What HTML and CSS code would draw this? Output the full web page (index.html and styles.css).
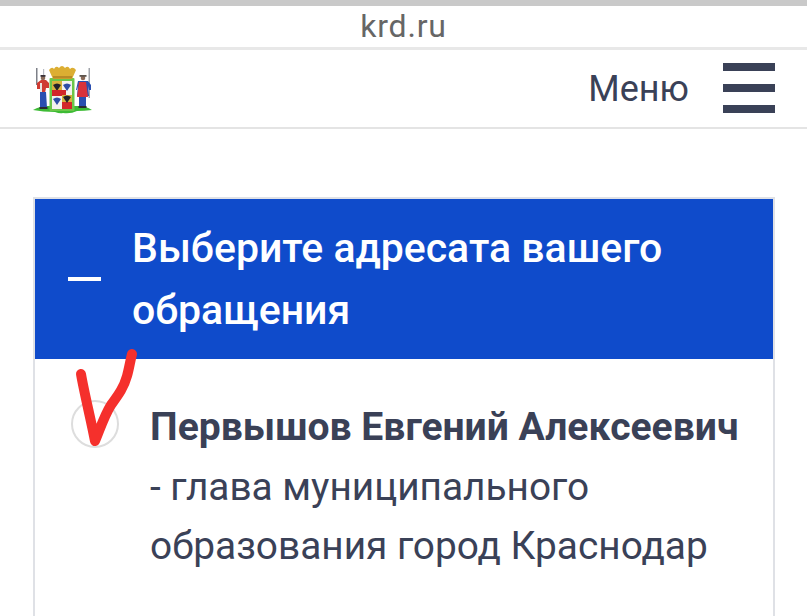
FILE: index.html
```html
<!DOCTYPE html>
<html lang="ru">
<head>
<meta charset="utf-8">
<title>krd.ru</title>
<link rel="stylesheet" href="styles.css">
</head>
<body>
<div class="addr">krd.ru</div>
<div class="top">
  <svg class="logo" width="66" height="56" viewBox="0 0 66 56">
    <filter id="soft"><feGaussianBlur stdDeviation="0.45"/></filter>
    <g filter="url(#soft)">
      <!-- ground -->
      <path d="M3 49q7-4 15-4h30q8 0 14 4q-8 1-15 1q-6 3-14 2q-3 1-8-1q-12 0-22-2z" fill="#3dbb35"/>
      <!-- left guard -->
      <rect x="6" y="7" width="1.500" height="17" fill="#7d8088"/>
      <rect x="13" y="8" width="1.200" height="8" fill="#b9bcc4"/>
      <circle cx="13" cy="17" r="2.300" fill="#8a6a58"/>
      <rect x="10.500" y="14" width="5" height="1.800" fill="#3a3238"/>
      <path d="M7 22l4-3h5l3 3v5h-3l-1 5h-5v-4H7z" fill="#cf3a30"/>
      <rect x="10" y="22" width="2" height="9" fill="#e8e4e0"/>
      <path d="M10 31h6l1 16h-7z" fill="#2c4fb0"/>
      <rect x="9.500" y="46" width="8" height="2" fill="#2b2b33"/>
      <!-- shield -->
      <rect x="19.500" y="17" width="25" height="33" rx="1" fill="#6cc64a"/>
      <rect x="22" y="20" width="20" height="28" fill="#f4f2ee"/>
      <rect x="22" y="20" width="10" height="14" fill="#d9b23c"/>
      <path d="M23 24q4-3 8 0l-2 3l-2 3l-2-3z" fill="#23232b"/>
      <rect x="22" y="29" width="14" height="6" fill="#d3262c"/>
      <path d="M33 24q4-3 8 0l-2 3l-2 3l-2-3z" fill="#2f4ea6"/>
      <path d="M23 38q4-3 8 0l-2 3l-2 3l-2-3z" fill="#2f4ea6"/>
      <rect x="32" y="34" width="10" height="7" fill="#d9b23c"/>
      <rect x="32" y="41" width="10" height="7" fill="#d3262c"/>
      <path d="M33 36q4-3 8 0l-2 3l-2 3l-2-3z" fill="#23232b"/>
      <!-- crown -->
      <path d="M19 9q3-4 5-1q2-4 5-1q3-4 6 0q3-3 5 1q3-3 6 1l-4 9H23z" fill="#dcae32"/>
      <rect x="23" y="15" width="19" height="2.500" fill="#b98a26"/>
      <!-- right guard -->
      <rect x="58.500" y="7" width="1.500" height="30" fill="#a0a3aa"/>
      <circle cx="53" cy="17" r="2.300" fill="#8a6a58"/>
      <rect x="49.500" y="14" width="7" height="1.800" fill="#5d554e"/>
      <path d="M46 29l2-9h10l3 4v5h-2l-1-4l1 10H47l1-10l-1 4z" fill="#2c4fb0"/>
      <path d="M49 21h7l2 15H47z" fill="#d9333a"/>
      <rect x="49" y="36" width="7" height="10" fill="#2c4fb0"/>
      <rect x="48.500" y="45" width="8" height="2" fill="#2b2b33"/>
    </g>
  </svg>
  <div class="menu">
    <span class="menu-label">Меню</span>
    <span class="burger"><i></i><i></i><i></i></span>
  </div>
</div>
<div class="content">
  <div class="box">
    <div class="box-head">
      <span class="dash"></span>
      <h2>Выберите адресата вашего обращения</h2>
    </div>
    <div class="row">
      <span class="radio"></span>
      <p class="person"><b>Первышов Евгений Алексеевич</b><br>- глава муниципального образования город Краснодар</p>
    </div>
  </div>
</div>
<svg class="tick" width="807" height="616" viewBox="0 0 807 616">
  <path d="M81 374C84 392 91 420 95 441C99 432 104 416 111 405C119 394 124 387 127 376C129 369 130 362 132 354" fill="none" stroke="#f5302c" stroke-width="10" stroke-linecap="round" stroke-linejoin="round"/>
</svg>
</body>
</html>
```
FILE: styles.css
```css
html, body { margin:0; padding:0; }
body { width:807px; height:616px; overflow:hidden; background:#fff; font-family:Roboto, "Noto Sans", sans-serif; color:#3a4157; }
.addr { height:41px; border-top:6px solid #c9c9c9; border-bottom:3px solid #e8e8e8; text-align:center; font-size:32px; line-height:41px; color:#666; letter-spacing:.8px; }
.top { height:77px; border-bottom:2px solid #e4e4e4; display:flex; align-items:center; justify-content:space-between; padding:0 32px 0 30px; }
.logo { display:block; }
.menu { display:flex; align-items:center; gap:34px; }
.menu-label { font-size:36px; font-weight:400; }
.burger { display:flex; flex-direction:column; gap:13px; width:52px; margin-top:-2px; }
.burger i { display:block; height:8px; background:#3a4157; }
.content { padding:68px 32px 0 33px; }
.box { border:2px solid #dfe1e6; border-bottom:0; height:420px; }
.box-head { background:#0f4bcb; color:#fff; display:flex; align-items:center; padding:18px 40px 18px 33px; gap:31px; }
.dash { width:33px; height:4px; background:#fff; flex:none; }
.box-head h2 { margin:0; font-size:41px; line-height:62px; font-weight:500; }
.row { display:flex; padding:41px 0 0 36px; gap:31px; }
.radio { width:44px; height:44px; border:2px solid #ddd; border-radius:50%; flex:none; }
.person { margin:-3px 0 0; font-size:38.800px; line-height:59px; color:#3a4157; }
.person b { font-weight:700; font-size:39.100px; }
.tick { position:absolute; left:0; top:0; pointer-events:none; }
```
